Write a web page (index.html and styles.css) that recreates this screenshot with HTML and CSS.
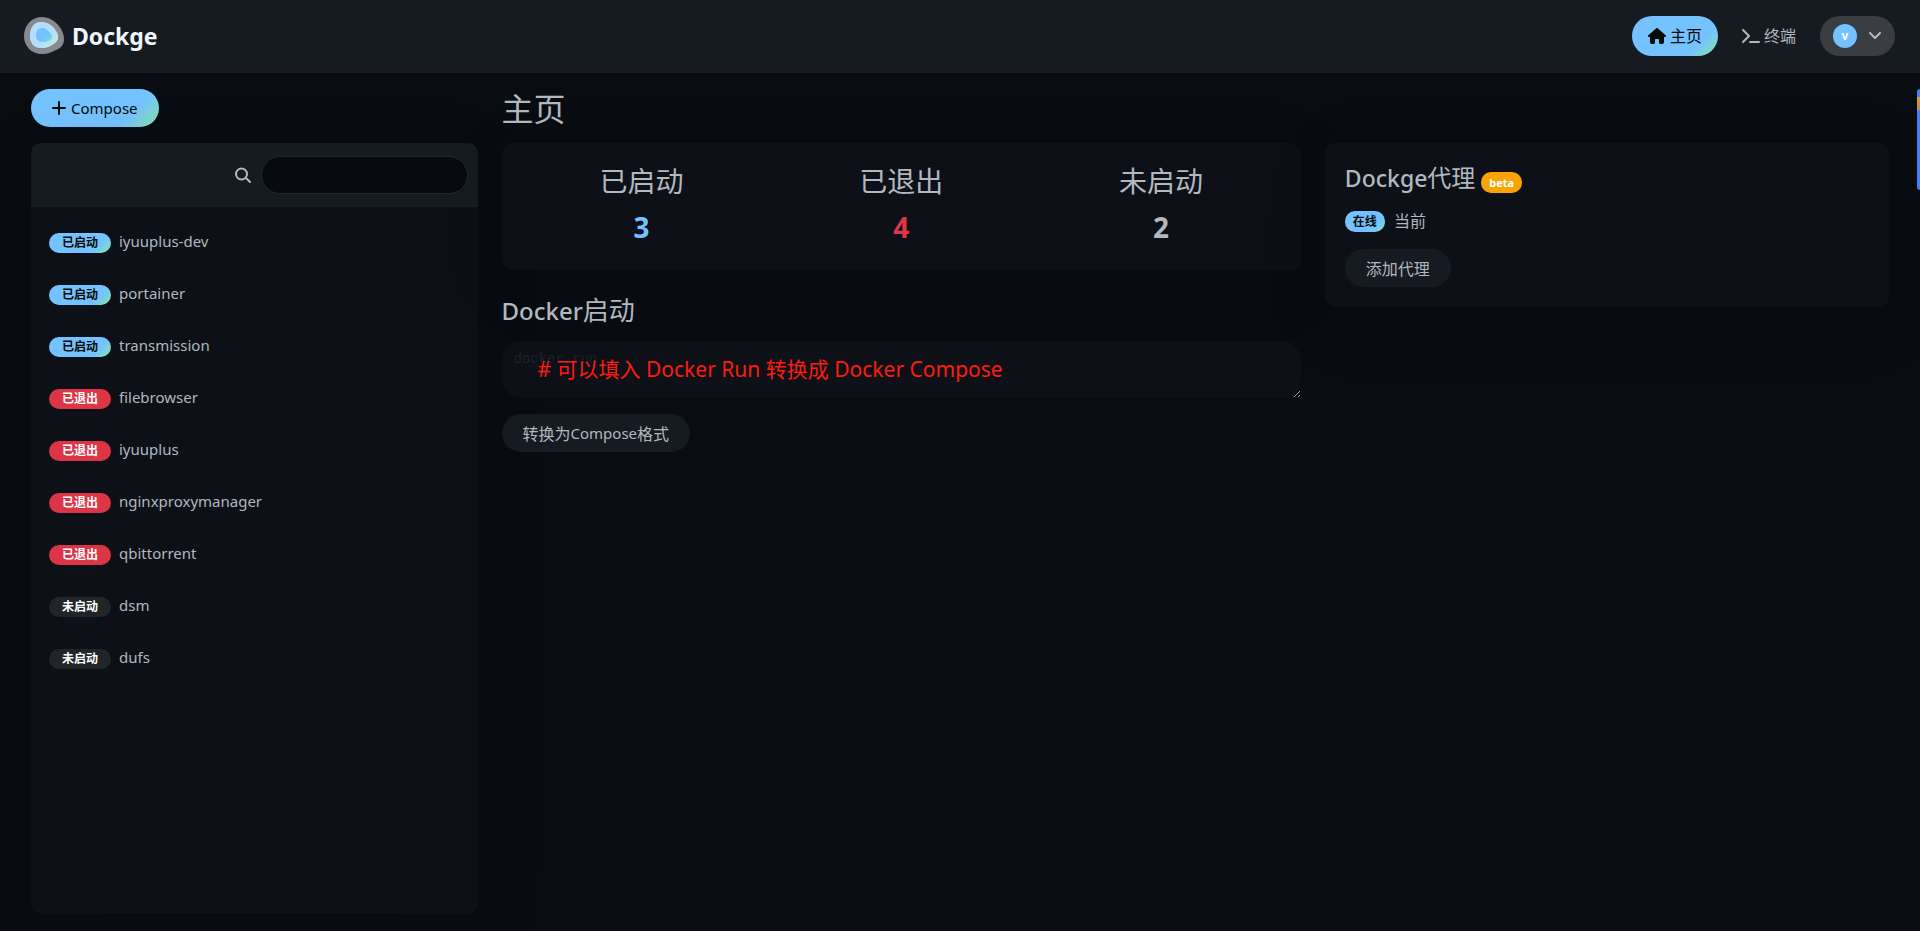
FILE: index.html
```
<!DOCTYPE html>
<html lang="zh-CN">
<head>
    <meta charset="UTF-8">
    <meta name="viewport" content="width=device-width, initial-scale=1.0">
    <title>Dockge</title>
    <link rel="stylesheet" href="styles.css">
</head>
<body>
    <header class="topbar">
        <a href="#" class="brand">
            <svg class="logo" viewBox="0 0 40 40" aria-hidden="true">
                <defs>
                    <linearGradient id="logo-fill" x1="0" y1="0" x2="1" y2="1">
                        <stop offset="0.6" stop-color="#74c2ff"/>
                        <stop offset="1" stop-color="#86e6a9"/>
                    </linearGradient>
                </defs>
                <path fill="#88898c" d="M18 1C25 1 31 5 35 10C38 14 40 18 40 23C40 29 37 32 32 34C28 36 24 38 18 38C7 38 0 30 0 20C0 9 8 1 18 1Z"/>
                <path fill="#fff" d="M17 6C24 6 29 10 32 15C35 19 35 24 31 27C27 30 23 32 17 32C10 32 6 27 6 20C6 12 10 6 17 6Z"/>
                <path fill="url(#logo-fill)" fill-opacity="0.55" d="M17 6C24 6 29 10 32 15C35 19 35 24 31 27C27 30 23 32 17 32C10 32 6 27 6 20C6 12 10 6 17 6Z"/>
                <path fill="url(#logo-fill)" d="M18 12C22 12 24 15 27 18C29 20 29 23 26 24C23 26 21 26 18 26C14 26 12 23 12 19C12 15 14 12 18 12Z"/>
            </svg>
            <span>Dockge</span>
        </a>
        <nav class="nav">
            <a href="#" class="nav-link active">
                <svg width="18" height="16" viewBox="0 0 576 512" aria-hidden="true"><path fill="currentColor" d="M576 256c0 18-15 32-32 32h-32l1 160c0 36-20 64-56 64h-57c-26 0-48-20-48-48v-80c0-18-14-32-32-32h-64c-18 0-32 14-32 32v80c0 28-22 48-48 48h-56c-36 0-56-28-56-56V288H32c-18 0-32-14-32-32 0-9 3-17 10-24L266 8c7-7 15-8 22-8s15 2 21 7l255 225c8 7 12 15 12 24z"/></svg>
                <span>主页</span>
            </a>
            <a href="#" class="nav-link">
                <svg width="18" height="16" viewBox="0 0 18 16" aria-hidden="true"><path fill="none" stroke="currentColor" stroke-width="2" stroke-linecap="round" stroke-linejoin="round" d="M1 2L7 8L1 14M8 14H17"/></svg>
                <span>终端</span>
            </a>
            <button type="button" class="profile">
                <span class="avatar">v</span>
                <svg width="14" height="8" viewBox="0 0 14 8" aria-hidden="true"><path fill="none" stroke="currentColor" stroke-width="2" stroke-linecap="round" stroke-linejoin="round" d="M2 1L7 6L12 1"/></svg>
            </button>
        </nav>
    </header>

    <main class="layout">
        <aside class="sidebar">
            <button type="button" class="btn btn-primary">
                <svg width="14" height="14" viewBox="0 0 14 14" aria-hidden="true"><path fill="none" stroke="currentColor" stroke-width="2" stroke-linecap="round" d="M7 1V13M1 7H13"/></svg>
                <span class="latin">Compose</span>
            </button>
            <div class="stack-list">
                <div class="list-header">
                    <label for="search" aria-label="搜索">
                        <svg width="16" height="16" viewBox="0 0 16 16" aria-hidden="true"><path fill="none" stroke="currentColor" stroke-width="2" stroke-linecap="round" d="M12 7A5 5 0 1 1 1 7A5 5 0 1 1 12 7M11 11L15 15"/></svg>
                    </label>
                    <input type="text" id="search" class="search-input">
                </div>
                <div class="list-items">
                    <a href="#" class="item"><span class="badge running">已启动</span><span>iyuuplus-dev</span></a>
                    <a href="#" class="item"><span class="badge running">已启动</span><span>portainer</span></a>
                    <a href="#" class="item"><span class="badge running">已启动</span><span>transmission</span></a>
                    <a href="#" class="item"><span class="badge exited">已退出</span><span>filebrowser</span></a>
                    <a href="#" class="item"><span class="badge exited">已退出</span><span>iyuuplus</span></a>
                    <a href="#" class="item"><span class="badge exited">已退出</span><span>nginxproxymanager</span></a>
                    <a href="#" class="item"><span class="badge exited">已退出</span><span>qbittorrent</span></a>
                    <a href="#" class="item"><span class="badge inactive">未启动</span><span>dsm</span></a>
                    <a href="#" class="item"><span class="badge inactive">未启动</span><span>dufs</span></a>
                </div>
            </div>
        </aside>

        <section class="content">
            <h1>主页</h1>
            <div class="row">
                <div class="left">
                    <div class="card stats">
                        <div class="stat">
                            <h3>已启动</h3>
                            <span class="num num-running">3</span>
                        </div>
                        <div class="stat">
                            <h3>已退出</h3>
                            <span class="num num-exited">4</span>
                        </div>
                        <div class="stat">
                            <h3>未启动</h3>
                            <span class="num">2</span>
                        </div>
                    </div>
                    <h2>Docker<span class="cjk">启动</span></h2>
                    <div class="run-box">
                        <textarea class="docker-run" aria-label="Docker启动" placeholder="docker run ..."></textarea>
                        <p class="note"># 可以填入 Docker Run 转换成 Docker Compose</p>
                    </div>
                    <button type="button" class="btn btn-normal">转换为<span class="latin">Compose</span>格式</button>
                </div>
                <div class="right">
                    <div class="card agents">
                        <h4>Dockge<span class="cjk">代理</span> <span class="tag tag-beta">beta</span></h4>
                        <div class="agent"><span class="tag tag-online">在线</span><span>当前</span></div>
                        <button type="button" class="btn btn-normal">添加代理</button>
                    </div>
                </div>
            </div>
        </section>
    </main>
    <div class="side-tab"></div>
</body>
</html>
```
FILE: styles.css
```
* {
    box-sizing: border-box;
}
body {
    display: flex;
    flex-direction: column;
    min-height: 100vh;
    margin: 0;
    background-color: #090c10;
    color: #b1b8c0;
    font-family: "Noto Sans", "Noto Sans CJK SC", sans-serif;
    font-size: 16px;
    line-height: 24px;
    overflow-x: hidden;
}
h1, h2, h3, h4, p {
    margin: 0;
    font-weight: 400;
}
a {
    color: inherit;
    text-decoration: none;
}
button, input, textarea {
    font-family: inherit;
    font-size: 16px;
    color: inherit;
}
svg {
    flex-shrink: 0;
}

/* Top bar */
.topbar {
    display: flex;
    justify-content: space-between;
    align-items: center;
    height: 73px;
    padding: 0 25px 0 24px;
    background-color: #161b22;
    border-bottom: 1px solid #161b22;
}
.brand {
    display: flex;
    align-items: center;
    gap: 8px;
    color: #f0f6fc;
    font-size: 23px;
    font-weight: 700;
    line-height: 40px;
}
.logo {
    width: 40px;
    height: 40px;
}
.nav {
    display: flex;
    gap: 8px;
}
.nav-link {
    display: flex;
    align-items: center;
    gap: 4px;
    height: 40px;
    padding: 0 16px;
    border-radius: 50px;
}
.nav-link.active {
    color: #020b05;
    background: linear-gradient(135deg, #74c2ff, #74c2ff 75%, #86e6a9);
}
.profile {
    display: flex;
    align-items: center;
    gap: 11px;
    height: 40px;
    padding: 0 13px;
    border: none;
    border-radius: 50px;
    background-color: #3a3d41;
    cursor: pointer;
}
.avatar {
    width: 24px;
    height: 24px;
    border-radius: 50%;
    background-color: #74c2ff;
    color: white;
    font-size: 12px;
    font-weight: 700;
    line-height: 24px;
}

/* Page layout */
.layout {
    display: flex;
    flex: 1;
    padding: 0 19px 17px;
}
.sidebar {
    display: flex;
    flex-direction: column;
    align-items: flex-start;
    gap: 16px;
    width: 25%;
    padding: 16px 12px 0;
}
.content {
    width: 75%;
    padding: 16px 12px 0;
}
.row {
    display: flex;
    margin: 0 -12px;
}
.left {
    width: 58.3333%;
    padding: 0 12px;
}
.right {
    width: 41.6667%;
    padding: 0 12px;
}

.btn {
    display: inline-flex;
    align-items: center;
    height: 38px;
    padding: 0 21px;
    border: none;
    border-radius: 25px;
    cursor: pointer;
}
.btn-primary {
    gap: 5px;
    color: #020b05;
    background: linear-gradient(135deg, #74c2ff, #74c2ff 75%, #86e6a9);
}
.btn-normal {
    background-color: #161b22;
}
.latin {
    font-size: 15px;
}

/* Stack list */
.stack-list {
    flex: 1;
    width: 100%;
    border-radius: 10px;
    background-color: #0d1117;
    box-shadow: 0 15px 70px rgba(0, 0, 0, 0.1);
    overflow: hidden;
}
.list-header {
    display: flex;
    justify-content: flex-end;
    align-items: center;
    gap: 10px;
    height: 64px;
    padding: 0 10px;
    background-color: #161b22;
}
.list-header label {
    display: flex;
}
.search-input {
    width: 207px;
    height: 38px;
    padding: 0 12px;
    border: 1px solid #1d2634;
    border-radius: 50px;
    background-color: #070a10;
}
.list-items {
    padding: 10px;
}
.item {
    display: flex;
    align-items: center;
    gap: 8px;
    height: 52px;
    padding: 0 8px 4px;
    font-size: 15px;
}
.badge {
    width: 62px;
    height: 20px;
    margin-top: 4px;
    border-radius: 50px;
    font-size: 12px;
    font-weight: 700;
    line-height: 20px;
    text-align: center;
    color: white;
}
.running, .tag-online {
    color: #020b05;
    background: linear-gradient(135deg, #74c2ff, #74c2ff 75%, #86e6a9);
}
.exited {
    background-color: #dc3545;
}
.inactive {
    background-color: #212529;
}

/* Home */
h1 {
    margin-bottom: 14px;
    font-size: 32px;
    line-height: 40px;
}
.card {
    border-radius: 10px;
    background-color: #0d1117;
    box-shadow: 0 15px 70px rgba(0, 0, 0, 0.1);
}
.stats {
    display: flex;
    padding: 20px 10px;
    text-align: center;
}
.stat {
    flex: 1;
}
.stat h3 {
    margin-bottom: 6px;
    font-size: 28px;
    line-height: 36px;
}
.num {
    display: block;
    font-size: 28px;
    font-weight: 700;
    line-height: 45px;
}
.num-running {
    color: #74c2ff;
}
.num-exited {
    color: #dc3545;
}
h2 {
    margin: 24px 0 14px;
    font-size: 24px;
    font-weight: 500;
    line-height: 33px;
}
h2 .cjk {
    font-size: 26px;
    font-weight: 400;
}
.run-box {
    position: relative;
    margin-bottom: 16px;
}
.docker-run {
    display: block;
    width: 100%;
    height: 57px;
    padding: 10px 12px;
    border: none;
    border-radius: 19px;
    background-color: #0d1117;
    font-family: "Liberation Mono", monospace;
    font-size: 14px;
    resize: vertical;
}
.docker-run::placeholder {
    color: #1d2228;
}
/* Hint lies over the text box */
.note {
    position: absolute;
    top: 12px;
    left: 36px;
    color: #ff1a0e;
    font-size: 21px;
    line-height: 32px;
    pointer-events: none;
}
.agents {
    padding: 20px;
}
h4 {
    margin-bottom: 16px;
    font-size: 23px;
    font-weight: 500;
    line-height: 30px;
}
h4 .cjk {
    font-size: 24px;
    font-weight: 400;
}
.tag {
    display: inline-block;
    height: 21px;
    padding: 0 8px;
    border-radius: 10px;
    font-size: 12px;
    font-weight: 700;
    line-height: 21px;
}
.tag-beta {
    background-color: #f8a306;
    color: white;
    font-size: 11px;
}
.agent {
    display: flex;
    align-items: center;
    gap: 9px;
    margin-bottom: 16px;
}

/* Tab peeking in from the window edge */
.side-tab {
    position: absolute;
    top: 89px;
    right: 0;
    width: 3px;
    height: 101px;
    border-radius: 3px 0 0 3px;
    background: linear-gradient(#4080ff 8px, #d99a3c 8px, #b98a55 21px, #4080ff 21px);
}
```
